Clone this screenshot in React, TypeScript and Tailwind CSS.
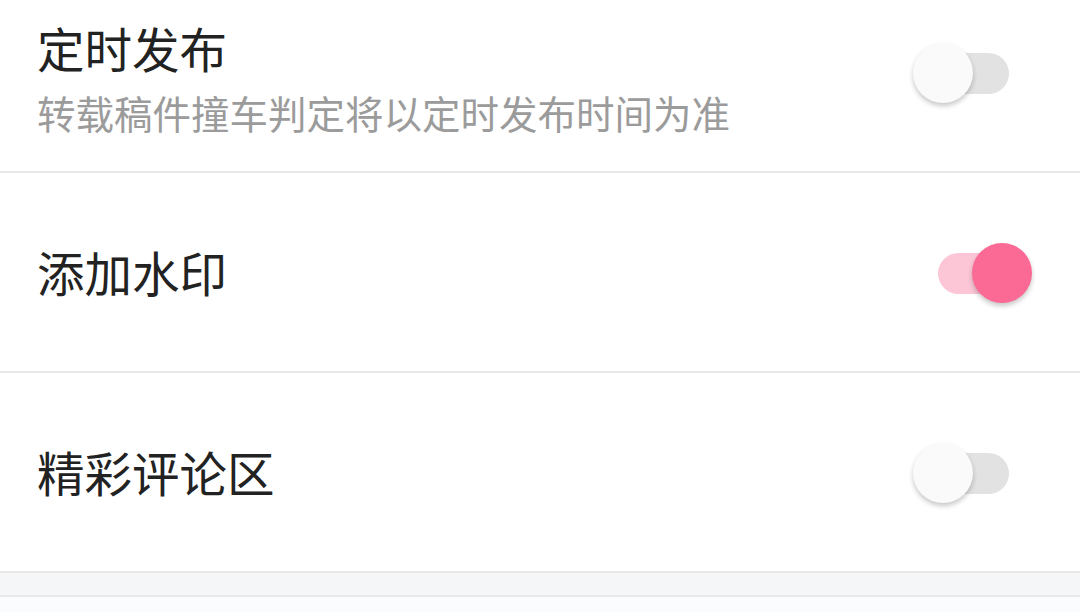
import { useState } from 'react';

interface SettingRowProps {
  title: string;
  subtitle?: string;
  checked: boolean;
  onToggle: () => void;
}

const Toggle = ({ checked, onToggle }: { checked: boolean; onToggle: () => void }) => (
  <button
    type="button"
    onClick={onToggle}
    className="relative w-[120px] h-[62px] flex items-center shrink-0 mt-[2px]"
  >
    <span
      className={`absolute left-[25px] w-[71px] h-[41px] rounded-full ${
        checked ? 'bg-[#fcc6d7]' : 'bg-[#e2e2e2]'
      }`}
    />
    <span
      className={`absolute top-[1px] w-[60px] h-[60px] rounded-full shadow-[0_3px_5px_rgba(0,0,0,0.22)] ${
        checked ? 'left-[59px] bg-[#fb6a94]' : 'left-0 bg-[#fafafa]'
      }`}
    />
  </button>
);

const SettingRow = ({ title, subtitle, checked, onToggle }: SettingRowProps) => (
  <div className="h-[200px] flex items-center justify-between pl-[37px] pr-[47px] border-b-2 border-[#e8e8e8] bg-white">
    <div className={`flex flex-col ${subtitle ? 'pt-[15px]' : ''}`}>
      <span className="text-[47.5px] leading-[64px] text-[#222222]">{title}</span>
      {subtitle && (
        <span className="text-[38.5px] leading-[64px] text-[#9b9b9b]">{subtitle}</span>
      )}
    </div>
    <Toggle checked={checked} onToggle={onToggle} />
  </div>
);

const App = () => {
  const [settings, setSettings] = useState({
    schedule: false,
    watermark: true,
    comments: false,
  });

  const toggle = (key: keyof typeof settings) => () =>
    setSettings((prev) => ({ ...prev, [key]: !prev[key] }));

  return (
    <div
      className="w-[1080px] h-[612px] overflow-hidden bg-white"
      style={{ fontFamily: '"Noto Sans CJK SC", "Noto Sans", sans-serif' }}
    >
      <div className="-mt-[27px]">
        <SettingRow
          title="定时发布"
          subtitle="转载稿件撞车判定将以定时发布时间为准"
          checked={settings.schedule}
          onToggle={toggle('schedule')}
        />
        <SettingRow title="添加水印" checked={settings.watermark} onToggle={toggle('watermark')} />
        <SettingRow title="精彩评论区" checked={settings.comments} onToggle={toggle('comments')} />
        <div className="h-[24px] bg-[#f5f6f8] border-b-2 border-[#e8e9ec]" />
        <div className="h-[40px] bg-[#fbfcfd]" />
      </div>
    </div>
  );
};

export default App;
